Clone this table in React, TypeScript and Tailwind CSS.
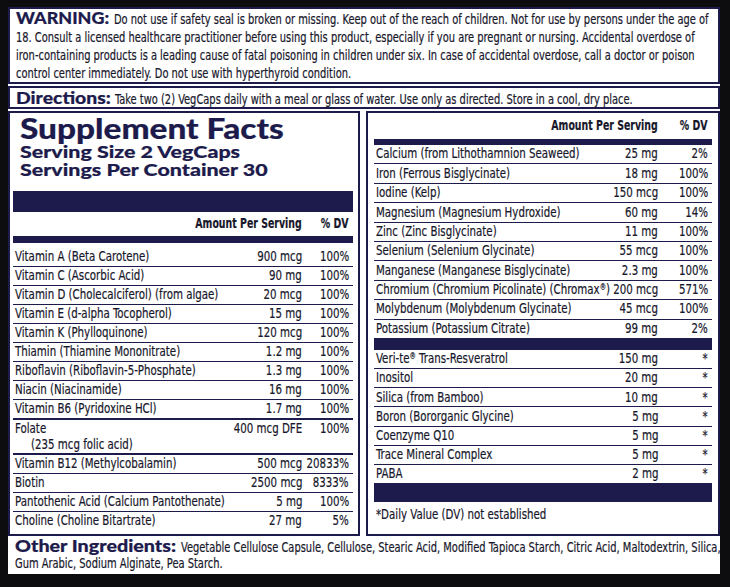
import React from "react";

type Row = { name: string; amt: string; dv: string; sub?: string; thick?: boolean; last?: boolean };

const leftRows: Row[] = [
  { name: "Vitamin A (Beta Carotene)", amt: "900 mcg", dv: "100%" },
  { name: "Vitamin C (Ascorbic Acid)", amt: "90 mg", dv: "100%" },
  { name: "Vitamin D (Cholecalciferol) (from algae)", amt: "20 mcg", dv: "100%" },
  { name: "Vitamin E (d-alpha Tocopherol)", amt: "15 mg", dv: "100%" },
  { name: "Vitamin K (Phylloquinone)", amt: "120 mcg", dv: "100%" },
  { name: "Thiamin (Thiamine Mononitrate)", amt: "1.2 mg", dv: "100%" },
  { name: "Riboflavin (Riboflavin-5-Phosphate)", amt: "1.3 mg", dv: "100%" },
  { name: "Niacin (Niacinamide)", amt: "16 mg", dv: "100%" },
  { name: "Vitamin B6 (Pyridoxine HCl)", amt: "1.7 mg", dv: "100%", thick: true },
  { name: "Folate", amt: "400 mcg DFE", dv: "100%", sub: "(235 mcg folic acid)", thick: true },
  { name: "Vitamin B12 (Methylcobalamin)", amt: "500 mcg", dv: "20833%" },
  { name: "Biotin", amt: "2500 mcg", dv: "8333%" },
  { name: "Pantothenic Acid (Calcium Pantothenate)", amt: "5 mg", dv: "100%" },
  { name: "Choline (Choline Bitartrate)", amt: "27 mg", dv: "5%", last: true },
];

const minerals: Row[] = [
  { name: "Calcium (from Lithothamnion Seaweed)", amt: "25 mg", dv: "2%" },
  { name: "Iron (Ferrous Bisglycinate)", amt: "18 mg", dv: "100%" },
  { name: "Iodine (Kelp)", amt: "150 mcg", dv: "100%" },
  { name: "Magnesium (Magnesium Hydroxide)", amt: "60 mg", dv: "14%" },
  { name: "Zinc (Zinc Bisglycinate)", amt: "11 mg", dv: "100%" },
  { name: "Selenium (Selenium Glycinate)", amt: "55 mcg", dv: "100%" },
  { name: "Manganese (Manganese Bisglycinate)", amt: "2.3 mg", dv: "100%" },
  { name: "Chromium (Chromium Picolinate) (Chromax®)", amt: "200 mcg", dv: "571%" },
  { name: "Molybdenum (Molybdenum Glycinate)", amt: "45 mcg", dv: "100%" },
  { name: "Potassium (Potassium Citrate)", amt: "99 mg", dv: "2%", last: true },
];

const others: Row[] = [
  { name: "Veri-te® Trans-Resveratrol", amt: "150 mg", dv: "*" },
  { name: "Inositol", amt: "20 mg", dv: "*" },
  { name: "Silica (from Bamboo)", amt: "10 mg", dv: "*" },
  { name: "Boron (Bororganic Glycine)", amt: "5 mg", dv: "*" },
  { name: "Coenzyme Q10", amt: "5 mg", dv: "*" },
  { name: "Trace Mineral Complex", amt: "5 mg", dv: "*" },
  { name: "PABA", amt: "2 mg", dv: "*", last: true },
];

const heavy = "font-['Lato','Inter',sans-serif] font-black text-[#1d1b4c]";

// registered marks sit small and raised on the label
function withMarks(s: string) {
  return s.split("®").flatMap((part, i) =>
    i === 0
      ? [part]
      : [
          <sup key={i} className="text-[9px]">
            ®
          </sup>,
          part,
        ]
  );
}

// condensed text: the label face is much narrower than any installed font
function N({ children, right }: { children: React.ReactNode; right?: boolean }) {
  return (
    <span className={`inline-block whitespace-nowrap scale-x-[0.785] ${right ? "origin-right" : "origin-left"}`}>
      {children}
    </span>
  );
}

function FactRow({ row, dvW, h = "h-[18px]" }: { row: Row; dvW: string; h?: string }) {
  const border = row.last ? "" : row.thick ? "border-b-2 border-[#1d1b4c]" : "border-b border-[#1d1b4c]";
  return (
    <div className={`flex pl-[2px] pr-[4px] text-[14.5px] ${border}`}>
      <div className="w-0 min-w-0 flex-1">
        <div className={`flex ${h} items-center`}>
          <N>{withMarks(row.name)}</N>
        </div>
        {row.sub && (
          <div className="flex h-[15px] items-start pl-[16px] leading-[13px]">
            <N>{row.sub}</N>
          </div>
        )}
      </div>
      <div className={`flex ${h} w-[90px] shrink-0 items-center justify-end`}>
        <N right>{row.amt}</N>
      </div>
      <div className={`flex ${h} ${dvW} shrink-0 items-center justify-end`}>
        <N right>{row.dv}</N>
      </div>
    </div>
  );
}

function ColHead({ h, dvW }: { h: string; dvW: string }) {
  return (
    <div className={`flex ${h} items-center pr-[4px] text-[14.5px] font-bold`}>
      <div className="flex-1" />
      <div className="flex w-[140px] justify-end">
        <span className="inline-block origin-right scale-x-[0.72] whitespace-nowrap">Amount Per Serving</span>
      </div>
      <div className={`flex ${dvW} justify-end`}>
        <span className="inline-block origin-right scale-x-[0.72] whitespace-nowrap">% DV</span>
      </div>
    </div>
  );
}

export default function App() {
  return (
    <div className="h-[587px] w-[730px] overflow-hidden bg-[#0d0d10] pl-[8px] pt-[7px] font-['DejaVu_Sans_Condensed','DejaVu_Sans',sans-serif] text-[#17172b] [-webkit-text-stroke:0.2px]">
      <div className="flex w-[712px] flex-col gap-[2px] bg-white">
        {/* warning */}
        <div className="whitespace-nowrap border-2 border-[#1d1b4c] px-[6px] text-[14px] leading-[18px]">
          <div>
            <span className="inline-block w-[98px]">
              <span className={`${heavy} inline-block origin-left scale-x-[1.12] text-[16px]`}>WARNING:</span>
            </span>
            <N>Do not use if safety seal is broken or missing. Keep out of the reach of children. Not for use by persons under the age of</N>
          </div>
          <div>
            <N>18. Consult a licensed healthcare practitioner before using this product, especially if you are pregnant or nursing. Accidental overdose of</N>
          </div>
          <div>
            <N>iron-containing products is a leading cause of fatal poisoning in children under six. In case of accidental overdose, call a doctor or poison</N>
          </div>
          <div>
            <N>control center immediately. Do not use with hyperthyroid condition.</N>
          </div>
        </div>

        {/* directions */}
        <div className="h-[23px] whitespace-nowrap border-2 border-[#1d1b4c] px-[6px] text-[14px] leading-[19px]">
          <span className="inline-block w-[99px]">
            <span className={`${heavy} inline-block origin-left scale-x-[1.21] text-[16px]`}>Directions:</span>
          </span>
          <N>Take two (2) VegCaps daily with a meal or glass of water. Use only as directed. Store in a cool, dry place.</N>
        </div>

        {/* facts columns */}
        <div className="flex h-[425px] gap-[6px]">
          <div className="flex w-[352px] shrink-0 flex-col border-2 border-[#1d1b4c] pl-[3px] pr-[5px]">
            <div className="pl-[7px]">
              <div className={`${heavy} origin-left scale-x-[1.15] whitespace-nowrap text-[29px] leading-[30px]`}>Supplement Facts</div>
              <div className={`${heavy} origin-left scale-x-[1.26] whitespace-nowrap text-[17px] leading-[18px]`}>Serving Size 2 VegCaps</div>
              <div className={`${heavy} origin-left scale-x-[1.26] whitespace-nowrap text-[17px] leading-[18px]`}>Servings Per Container 30</div>
            </div>
            <div className="mt-[12px] h-[21px] bg-[#1d1b4c]" />
            <ColHead h="h-[24px]" dvW="w-[47px]" />
            <div className="h-[7px] bg-[#1d1b4c]" />
            <div className="mt-[5px] flex flex-col">
              {leftRows.map((r) => (
                <FactRow key={r.name} row={r} dvW="w-[47px]" />
              ))}
            </div>
          </div>

          <div className="flex w-[354px] shrink-0 flex-col border-2 border-[#1d1b4c] px-[6px]">
            <ColHead h="h-[26px]" dvW="w-[50px]" />
            <div className="h-[6px] bg-[#1d1b4c]" />
            <div className="flex flex-col">
              {minerals.map((r) => (
                <FactRow key={r.name} row={r} dvW="w-[50px]" h="h-[18.4px]" />
              ))}
            </div>
            <div className="h-[12px] bg-[#1d1b4c]" />
            <div className="flex flex-col">
              {others.map((r) => (
                <FactRow key={r.name} row={r} dvW="w-[50px]" h="h-[18.2px]" />
              ))}
            </div>
            <div className="h-[19px] bg-[#1d1b4c]" />
            <div className="pl-[2px] pt-[2px] text-[14.5px]">
              <N>*Daily Value (DV) not established</N>
            </div>
          </div>
        </div>

        {/* other ingredients */}
        <div className="whitespace-nowrap px-[7px] pb-[3px] text-[14px] leading-[16px]">
          <div>
            <span className="inline-block w-[166px]">
              <span className={`${heavy} inline-block origin-left scale-x-[1.23] text-[16px]`}>Other Ingredients:</span>
            </span>
            <N>Vegetable Cellulose Capsule, Cellulose, Stearic Acid, Modified Tapioca Starch, Citric Acid, Maltodextrin, Silica,</N>
          </div>
          <div>
            <N>Gum Arabic, Sodium Alginate, Pea Starch.</N>
          </div>
        </div>
      </div>
    </div>
  );
}
